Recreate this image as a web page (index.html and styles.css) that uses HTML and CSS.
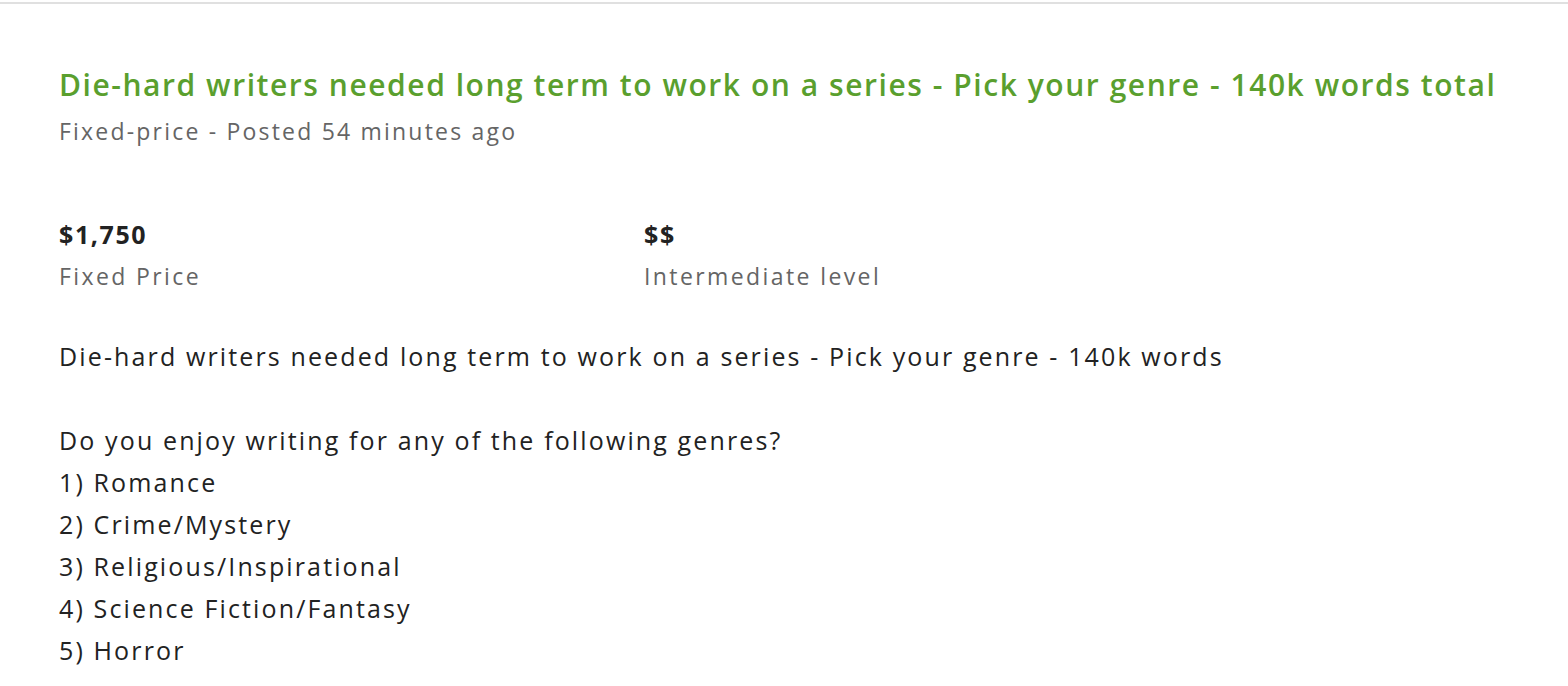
FILE: index.html
```html
<!DOCTYPE html>
<html lang="en">
<head>
    <meta charset="UTF-8">
    <title>Job posting</title>
    <link rel="stylesheet" href="styles.css">
</head>
<body>
    <div class="job">
        <header class="job-header">
            <h1 class="job-title">Die-hard writers needed long term to work on a series - Pick your genre - 140k words total</h1>
            <p class="job-meta">Fixed-price - Posted 54 minutes ago</p>
        </header>

        <div class="job-stats">
            <div class="stat">
                <strong>$1,750</strong>
                <span>Fixed Price</span>
            </div>
            <div class="stat">
                <strong>$$</strong>
                <span>Intermediate level</span>
            </div>
        </div>

        <div class="job-desc">
            <p>Die-hard writers needed long term to work on a series - Pick your genre - 140k words</p>
            <p>Do you enjoy writing for any of the following genres?<br>
            1) Romance<br>
            2) Crime/Mystery<br>
            3) Religious/Inspirational<br>
            4) Science Fiction/Fantasy<br>
            5) Horror</p>
        </div>
    </div>
</body>
</html>
```

FILE: styles.css
```css
* {
    margin: 0;
    padding: 0;
    box-sizing: border-box;
}

body {
    font-family: 'Open Sans', 'DejaVu Sans', sans-serif;
    background: #fff;
    color: #222;
    border-top: 2px solid #e0e0e0;
    margin-top: 2px;
}

.job {
    padding: 61px 59px 0;
}

/* 标题 */
.job-title {
    font-size: 30px;
    font-weight: 600;
    line-height: 40px;
    letter-spacing: 1.55px;
    color: #5a9f2e;
}

.job-meta {
    font-size: 23px;
    line-height: 32px;
    letter-spacing: 2.2px;
    color: #656565;
    margin-top: 10px;
}

/* 价格 */
.job-stats {
    display: grid;
    grid-template-columns: 585px 1fr;
    margin-top: 71px;
}

.stat strong {
    display: block;
    font-size: 25px;
    font-weight: 700;
    line-height: 32px;
    letter-spacing: 1.6px;
    color: #222;
}

.stat span {
    display: block;
    font-size: 23px;
    line-height: 36px;
    letter-spacing: 2.4px;
    color: #656565;
    margin-top: 8px;
}

/* 描述 */
.job-desc {
    margin-top: 41px;
    font-size: 25px;
    line-height: 42px;
    letter-spacing: 2.13px;
    color: #222;
}

.job-desc p + p {
    margin-top: 42px;
}
```
